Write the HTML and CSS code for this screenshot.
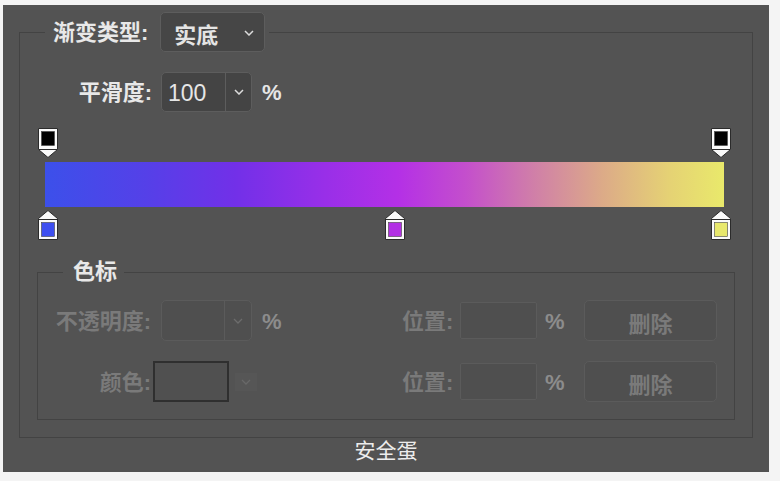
FILE: index.html
```html
<!DOCTYPE html>
<html lang="zh">
<head>
<meta charset="utf-8">
<title>渐变编辑器</title>
<link rel="stylesheet" href="styles.css">
</head>
<body>
<div class="panel">
  <fieldset class="group">
    <legend class="group-legend">
      <span class="label">渐变类型:</span>
      <span class="select">
        <span class="select-text">实底</span>
        <svg class="chev" width="10" height="6" viewBox="0 0 10 6"><path d="M1 1L5 5L9 1" fill="none" stroke="#dcdcdc" stroke-width="1.5"/></svg>
      </span>
    </legend>

    <div class="row smooth-row">
      <span class="label row-label">平滑度:</span>
      <span class="combo">
        <span class="combo-text">100</span>
        <span class="combo-btn"><svg width="10" height="6" viewBox="0 0 10 6"><path d="M1 1L5 5L9 1" fill="none" stroke="#dcdcdc" stroke-width="1.5"/></svg></span>
      </span>
      <span class="pct">%</span>
    </div>

    <div class="ramp">
      <div class="stops stops-top">
        <svg class="marker" style="--p:0" width="20" height="30" viewBox="0 0 20 30">
          <path d="M0.5 0.5H19.5V21.5L10 29.5L0.5 21.5Z" fill="#fafafa" stroke="#2b2b2b"/>
          <path d="M1 21.5H19" stroke="#2b2b2b"/>
          <rect x="3.5" y="3.5" width="13" height="14" fill="#000" stroke="#444" stroke-width="0.6"/>
        </svg>
        <svg class="marker" style="--p:1" width="20" height="30" viewBox="0 0 20 30">
          <path d="M0.5 0.5H19.5V21.5L10 29.5L0.5 21.5Z" fill="#fafafa" stroke="#2b2b2b"/>
          <path d="M1 21.5H19" stroke="#2b2b2b"/>
          <rect x="3.5" y="3.5" width="13" height="14" fill="#000" stroke="#444" stroke-width="0.6"/>
        </svg>
      </div>
      <div class="bar"></div>
      <div class="stops stops-bottom">
        <svg class="marker" style="--p:0" width="20" height="30" viewBox="0 0 20 30">
          <path d="M10 0.5L19.5 8.5V29.5H0.5V8.5Z" fill="#fafafa" stroke="#2b2b2b"/>
          <path d="M1 9.5H19" stroke="#2b2b2b"/>
          <rect x="3.5" y="12.5" width="13" height="14" fill="#3d4ef0" stroke="#444" stroke-width="0.6"/>
        </svg>
        <svg class="marker" style="--p:0.5153" width="20" height="30" viewBox="0 0 20 30">
          <path d="M10 0.5L19.5 8.5V29.5H0.5V8.5Z" fill="#fafafa" stroke="#2b2b2b"/>
          <path d="M1 9.5H19" stroke="#2b2b2b"/>
          <rect x="3.5" y="12.5" width="13" height="14" fill="#b22fe4" stroke="#444" stroke-width="0.6"/>
        </svg>
        <svg class="marker" style="--p:1" width="20" height="30" viewBox="0 0 20 30">
          <path d="M10 0.5L19.5 8.5V29.5H0.5V8.5Z" fill="#fafafa" stroke="#2b2b2b"/>
          <path d="M1 9.5H19" stroke="#2b2b2b"/>
          <rect x="3.5" y="12.5" width="13" height="14" fill="#e8e86c" stroke="#444" stroke-width="0.6"/>
        </svg>
      </div>
    </div>

    <fieldset class="stops-group">
      <legend class="stops-legend">色标</legend>
      <div class="row dis-row first">
        <div class="left">
          <span class="label dis-label">不透明度:</span>
          <span class="combo dis-combo">
            <span class="combo-text"></span>
            <span class="combo-btn"><svg width="10" height="6" viewBox="0 0 10 6"><path d="M1 1L5 5L9 1" fill="none" stroke="#6c6c6c" stroke-width="1.3"/></svg></span>
          </span>
          <span class="pct dis-pct">%</span>
        </div>
        <div class="right">
          <span class="dis-label pos-label">位置:</span>
          <span class="field"></span>
          <span class="pct dis-pct pct-right">%</span>
          <span class="btn">删除</span>
        </div>
      </div>
      <div class="row dis-row second">
        <div class="left">
          <span class="label dis-label">颜色:</span>
          <span class="swatch"></span>
          <span class="swatch-chev"><svg width="10" height="6" viewBox="0 0 10 6"><path d="M1 1L5 5L9 1" fill="none" stroke="#686868" stroke-width="1.3"/></svg></span>
        </div>
        <div class="right">
          <span class="dis-label pos-label">位置:</span>
          <span class="field"></span>
          <span class="pct dis-pct pct-right">%</span>
          <span class="btn">删除</span>
        </div>
      </div>
    </fieldset>
  </fieldset>
  <div class="caption">安全蛋</div>
</div>
</body>
</html>
```

FILE: styles.css
```css
html, body {
  margin: 0;
  padding: 0;
  background: #f4f4f4;
}

body {
  font-family: "Liberation Sans", "Noto Sans CJK SC", sans-serif;
}

.panel {
  margin: 5px 0 0 3px;
  width: 766px;
  height: 467px;
  box-sizing: border-box;
  padding-top: 7px;
  background: #535353;
  color: #e6e6e6;
  overflow: hidden;
}

.group {
  margin: 0 0 0 16px;
  width: 734px;
  box-sizing: border-box;
  border: 1px solid #434343;
  padding: 0 0 17px 0;
  min-width: 0;
}

.group-legend {
  display: flex;
  align-items: center;
  margin-left: 25px;
  padding: 0 4px 0 8px;
}

.label {
  font-size: 22px;
  font-weight: 700;
  line-height: 24px;
  padding-top: 2px;
  color: #e8e8e8;
  white-space: nowrap;
}

.select {
  display: flex;
  align-items: center;
  justify-content: space-between;
  margin-left: 12px;
  width: 105px;
  height: 40px;
  box-sizing: border-box;
  padding: 2px 10px 0 13px;
  background: #464646;
  border: 1px solid #5d5d5d;
  border-radius: 5px;
}

.select-text {
  font-size: 22px;
  font-weight: 700;
  color: #e4e4e4;
}

.row {
  display: flex;
  align-items: center;
}

.smooth-row {
  margin-top: 20px;
  height: 40px;
}

.row-label {
  width: 132px;
  text-align: right;
}

.combo {
  display: flex;
  margin-left: 9px;
  width: 91px;
  height: 40px;
  box-sizing: border-box;
  background: #444444;
  border: 1px solid #5d5d5d;
  border-radius: 5px;
}

.combo-text {
  width: 64px;
  box-sizing: border-box;
  padding: 2px 0 0 6px;
  font-size: 23px;
  line-height: 36px;
  color: #e6e6e6;
  border-right: 1px solid #5d5d5d;
}

.combo-btn {
  flex: 1;
  display: flex;
  align-items: center;
  justify-content: center;
}

.pct {
  margin-left: 10px;
  padding-top: 2px;
  font-size: 22px;
  font-weight: 700;
  color: #e6e6e6;
}

.ramp {
  margin: 16px 0 0 25px;
  width: 679px;
}

.stops {
  position: relative;
}

.stops-top {
  height: 34px;
}

.stops-bottom {
  height: 33px;
}

.marker {
  position: absolute;
  display: block;
  left: calc(3px + var(--p) * 672.5px - 10px);
}

.stops-top .marker {
  top: 0;
}

.stops-bottom .marker {
  top: 3px;
}

.bar {
  height: 45px;
  background: linear-gradient(to right,
    #3c50ea 0%,
    #5540e8 15%,
    #7230e8 28%,
    #982fe8 41%,
    #b430e6 52%,
    #c44fcc 62%,
    #d07fa8 72%,
    #dcaa88 82%,
    #e5d274 92%,
    #e9e96b 100%);
}

.stops-group {
  margin: 20px 17px 0 17px;
  border: 1px solid #434343;
  padding: 0 17px 17px 0;
  min-width: 0;
}

.stops-legend {
  margin-left: 25px;
  padding: 0 7px 0 10px;
  font-size: 22px;
  font-weight: 700;
  line-height: 24px;
  color: #e8e8e8;
}

.dis-row {
  height: 41px;
  justify-content: space-between;
}

.dis-row.first {
  margin-top: 16px;
}

.dis-row.second {
  margin-top: 20px;
}

.left, .right {
  display: flex;
  align-items: center;
}

.dis-label {
  font-size: 22px;
  font-weight: 700;
  line-height: 24px;
  padding-top: 2px;
  color: #7a7a7a;
  white-space: nowrap;
}

.left .dis-label {
  width: 113px;
  text-align: right;
}

.dis-combo {
  margin-left: 10px;
  height: 41px;
  background: #4f4f4f;
  border-color: #5b5b5b;
}

.dis-combo .combo-text {
  width: 63px;
  border-right-color: #5b5b5b;
}

.dis-pct {
  color: #8c8c8c;
}

.swatch {
  margin-left: 2px;
  width: 76px;
  height: 41px;
  box-sizing: border-box;
  border: 2px solid #2f2f2f;
  background: #505050;
}

.swatch-chev {
  display: flex;
  align-items: center;
  justify-content: center;
  margin-left: 6px;
  width: 22px;
  height: 18px;
  background: #565656;
}

.pos-label {
  width: 52px;
}

.field {
  margin-left: 6px;
  width: 77px;
  height: 37px;
  box-sizing: border-box;
  background: #4f4f4f;
  border: 1px solid #5b5b5b;
  border-radius: 2px;
}

.pct-right {
  margin-left: 8px;
  width: 22px;
}

.btn {
  display: flex;
  align-items: center;
  justify-content: center;
  margin-left: 17px;
  width: 133px;
  height: 41px;
  box-sizing: border-box;
  padding-top: 2px;
  background: #4f4f4f;
  border: 1px solid #5b5b5b;
  border-radius: 5px;
  font-size: 22px;
  font-weight: 700;
  color: #7a7a7a;
}

.caption {
  margin-top: 1px;
  text-align: center;
  font-size: 21px;
  line-height: 24px;
  color: #ececec;
}
```
